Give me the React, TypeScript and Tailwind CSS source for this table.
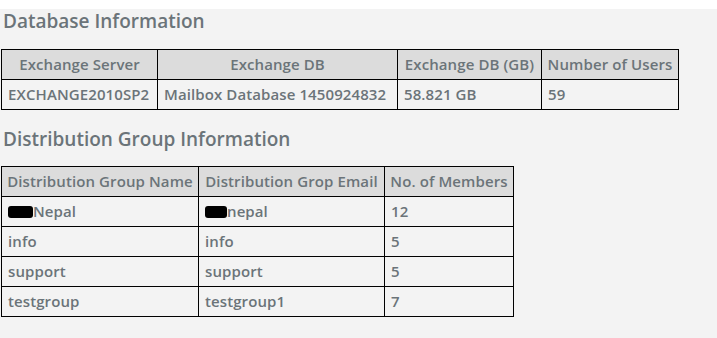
import React from 'react';

type Row = (string | React.ReactNode)[];

const dbHeaders = ['Exchange Server', 'Exchange DB', 'Exchange DB (GB)', 'Number of Users'];
const dbWidths = ['w-[156px]', 'w-[240px]', 'w-[144px]', 'w-[137px]'];
const dbRows: Row[] = [['EXCHANGE2010SP2', 'Mailbox Database 1450924832', '58.821 GB', '59']];

// blacked-out prefix in front of the first group name / email
function Redacted({ w }: { w: string }) {
  return <span className={`inline-block h-[12px] ${w} bg-black rounded-[3px] align-[-1px]`} />;
}

const groupHeaders = ['Distribution Group Name', 'Distribution Grop Email', 'No. of Members'];
const groupWidths = ['w-[197px]', 'w-[186px]', 'w-[129px]'];
const groupRows: Row[] = [
  [<><Redacted w="w-[25px]" />Nepal</>, <><Redacted w="w-[22px]" />nepal</>, '12'],
  ['info', 'info', '5'],
  ['support', 'support', '5'],
  ['testgroup', 'testgroup1', '7'],
];

function InfoTable({ headers, widths, rows }: { headers: string[]; widths: string[]; rows: Row[] }) {
  return (
    <table className="ml-px border-collapse border border-black table-fixed">
      <thead>
        <tr>
          {headers.map((h, i) => (
            <th
              key={h}
              className={`${widths[i]} h-[30px] p-0 text-center font-semibold bg-[#dcdcdc] border border-black whitespace-nowrap`}
            >
              {h}
            </th>
          ))}
        </tr>
      </thead>
      <tbody>
        {rows.map((row, r) => (
          <tr key={r}>
            {row.map((cell, c) => (
              <td key={c} className="h-[30px] py-0 px-[6px] text-left font-semibold border border-black whitespace-nowrap">
                {cell}
              </td>
            ))}
          </tr>
        ))}
      </tbody>
    </table>
  );
}

export default function App() {
  return (
    <div className="w-[717px] h-[338px] bg-white pt-[9px] font-['Open_Sans',sans-serif] text-[#6b7479]">
      <div className="h-full bg-[#f3f3f3] text-[15px] tracking-[0.1px]">
        <h2 className="pl-[3px] text-[19px] leading-[24px] font-semibold tracking-normal mb-[16px]">Database Information</h2>
        <InfoTable headers={dbHeaders} widths={dbWidths} rows={dbRows} />
        <h2 className="pl-[3px] text-[19px] leading-[24px] font-semibold tracking-normal mt-[17px] mb-[15px]">
          Distribution Group Information
        </h2>
        <InfoTable headers={groupHeaders} widths={groupWidths} rows={groupRows} />
      </div>
    </div>
  );
}
